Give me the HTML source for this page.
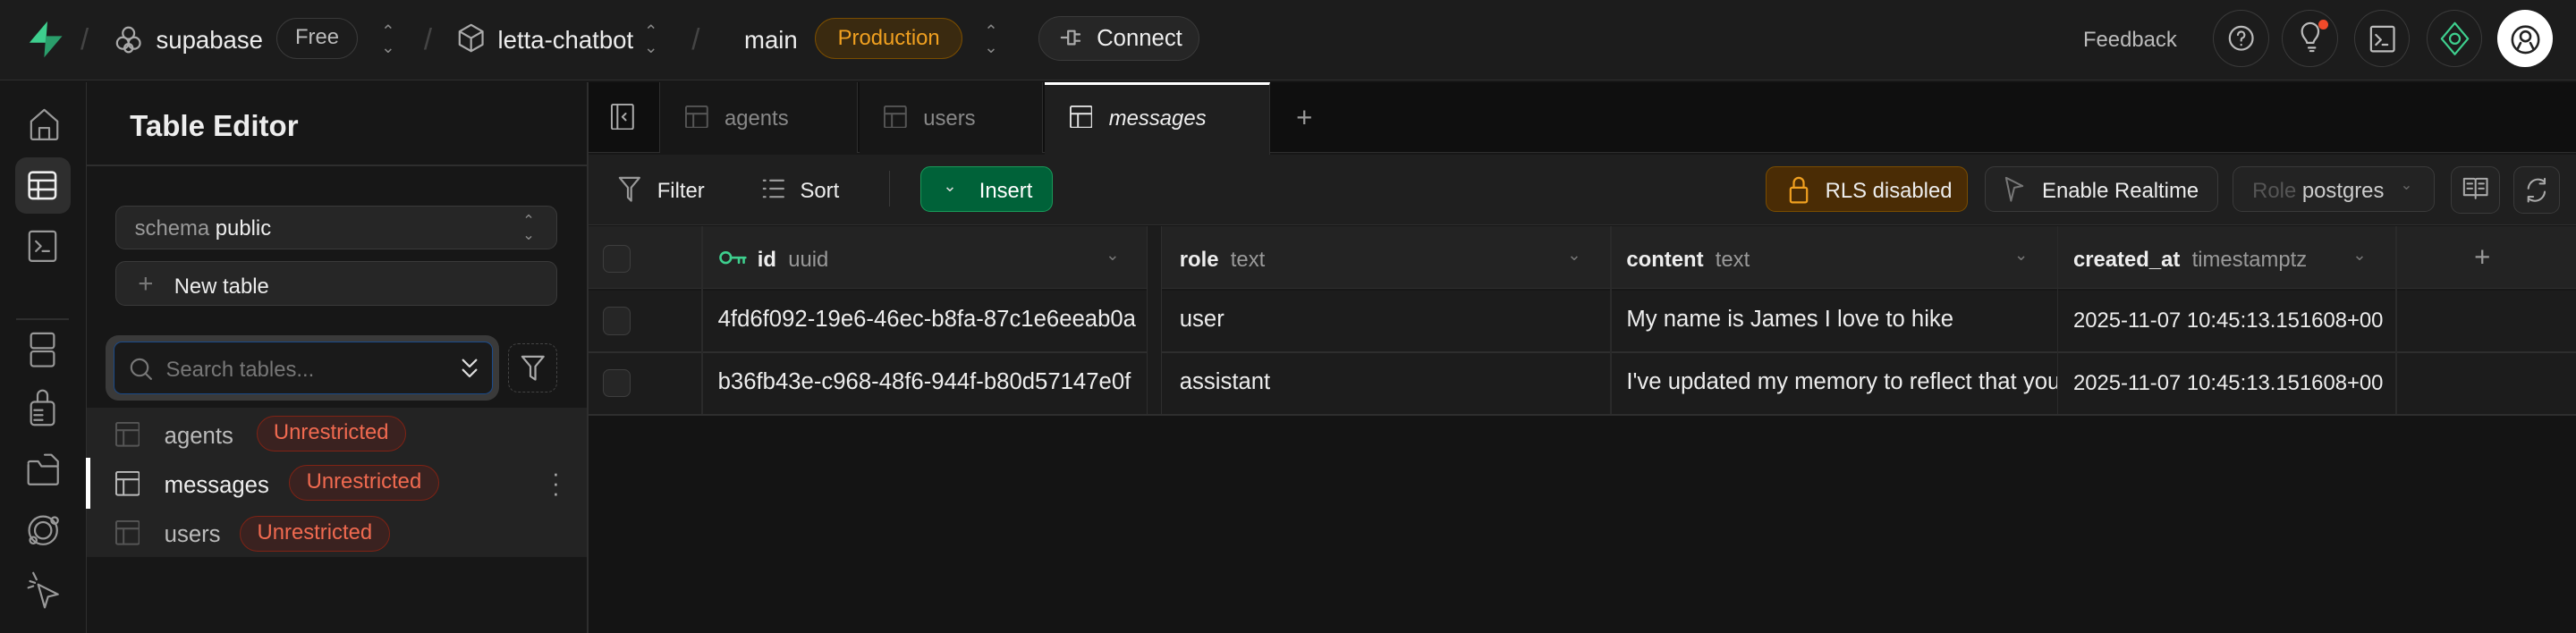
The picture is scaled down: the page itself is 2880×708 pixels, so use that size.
<!DOCTYPE html>
<html><head><meta charset="utf-8"><style>
*{box-sizing:border-box;margin:0;padding:0}
html,body{width:2880px;height:708px;overflow:hidden;background:#171717}
#z{zoom:1.83673;width:1568px;height:386px;position:relative;font-family:"Liberation Sans",sans-serif;color:#ededed;font-size:13px;background:#171717}
.a{position:absolute}
.t{position:absolute;white-space:nowrap;margin-top:1px}
svg{position:absolute;fill:none;stroke-linecap:round;stroke-linejoin:round}
.pill{position:absolute;border-radius:14px;border:1px solid #3a3a3a}
.btn{position:absolute;border:1px solid #3a3a3a;border-radius:6px;background:#262626}
.ur{position:absolute;height:22px;border-radius:11px;border:1px solid #7f2315;background:#3a2220;color:#f06a50;font-size:13px;line-height:20px;padding:0 10px}
.cb{position:absolute;left:367px;width:17px;height:17px;border:1px solid #3e3e3e;border-radius:4px;background:#262626}
.c{font-size:14px}
</style></head><body><div id="z">
<!-- top bar -->
<div class="a" style="left:0;top:0;width:1568px;height:49px;background:#1c1c1c;border-bottom:1px solid #2e2e2e"></div>
<svg style="left:17px;top:12px" width="22" height="24" viewBox="0 0 22 24"><path d="M12 1 L1 14 H11 Z" fill="#3ecf8e" stroke="none"/><path d="M10 23 L21 10 H11 Z" fill="#2a9e6b" stroke="none"/></svg>
<div class="t" style="left:49px;top:13px;color:#444;font-size:18px">/</div>
<svg style="left:70px;top:15px" width="16" height="18" viewBox="0 0 16 18" stroke="#aaa" stroke-width="1.2"><circle cx="8" cy="5" r="3.5"/><circle cx="4.5" cy="11" r="3.5"/><circle cx="11.5" cy="11" r="3.5"/><circle cx="8" cy="14" r="2.5"/></svg>
<div class="t" style="left:95px;top:15px;font-size:15px">supabase</div>
<div class="pill" style="left:168px;top:11px;width:50px;height:25px;color:#bbb;font-size:13px;text-align:center;line-height:23px">Free</div>
<div class="t" style="left:232px;top:13px;color:#888;font-size:10px;line-height:10px">&#8963;<br>&#8964;</div>
<div class="t" style="left:258px;top:13px;color:#444;font-size:18px">/</div>
<svg style="left:279px;top:14px" width="16" height="18" viewBox="0 0 16 18" stroke="#aaa" stroke-width="1.2"><path d="M8 1 L15 5 V13 L8 17 L1 13 V5 Z M1 5 L8 9 L15 5 M8 9 V17"/></svg>
<div class="t" style="left:303px;top:15px;font-size:15px">letta-chatbot</div>
<div class="t" style="left:392px;top:13px;color:#888;font-size:10px;line-height:10px">&#8963;<br>&#8964;</div>
<div class="t" style="left:421px;top:13px;color:#444;font-size:18px">/</div>
<div class="t" style="left:453px;top:15px;font-size:15px">main</div>
<div class="pill" style="left:496px;top:11px;width:90px;height:25px;background:#3a2a10;border-color:#7a4d00;color:#f0a020;font-size:13px;text-align:center;line-height:24px">Production</div>
<div class="t" style="left:599px;top:13px;color:#888;font-size:10px;line-height:10px">&#8963;<br>&#8964;</div>
<div class="pill" style="left:632px;top:10px;width:98px;height:27px;background:#262626;color:#eee;font-size:14px;line-height:27px;padding-left:35px">Connect</div>
<svg style="left:645px;top:17px" width="16" height="12" viewBox="0 0 16 12" stroke="#aaa" stroke-width="1.2"><path d="M1 6H5 M5 2 H9 V10 H5 Z M9 4 H12 M9 8 H12"/></svg>
<div class="t" style="left:1268px;top:16px;color:#bbb;font-size:13px">Feedback</div>
<div class="a" style="left:1347px;top:6px;width:34px;height:35px;border:1px solid #3a3a3a;border-radius:50%"></div>
<div class="a" style="left:1389px;top:6px;width:34px;height:35px;border:1px solid #3a3a3a;border-radius:50%"></div>
<div class="a" style="left:1433px;top:6px;width:34px;height:35px;border:1px solid #3a3a3a;border-radius:50%"></div>
<div class="a" style="left:1477px;top:6px;width:34px;height:35px;border:1px solid #3a3a3a;border-radius:50%"></div>
<div class="a" style="left:1520px;top:6px;width:34px;height:35px;background:#fff;border-radius:50%"></div>
<svg style="left:1356px;top:15px" width="16" height="16" viewBox="0 0 16 16" stroke="#bbb" stroke-width="1.2"><circle cx="8" cy="8" r="7"/><path d="M6 6a2 2 0 1 1 2.5 2c-.5.3-.5.8-.5 1.5M8 12v.1"/></svg>
<svg style="left:1399px;top:13px" width="16" height="20" viewBox="0 0 16 20" stroke="#bbb" stroke-width="1.2"><path d="M5 13c0-2-3-3-3-7a5 5 0 0 1 10 0c0 4-3 5-3 7Z M6 16h4 M7 18h2"/></svg>
<div class="a" style="left:1411px;top:12px;width:6px;height:6px;border-radius:50%;background:#f04a2a"></div>
<svg style="left:1442px;top:15px" width="16" height="17" viewBox="0 0 16 17" stroke="#bbb" stroke-width="1.2"><rect x="1" y="1" width="14" height="15" rx="1"/><path d="M4 6l3 3-3 3M8 12h3"/></svg>
<svg style="left:1485px;top:13px" width="18" height="21" viewBox="0 0 18 21" stroke="#3ecf8e" stroke-width="1.2"><path d="M9 1 L17 10.5 L9 20 L1 10.5 Z"/><circle cx="9" cy="10.5" r="3"/></svg>
<svg style="left:1528px;top:14px" width="18" height="20" viewBox="0 0 18 20" stroke="#222" stroke-width="1.4"><circle cx="9" cy="10" r="8"/><circle cx="9" cy="8" r="3"/><path d="M4 16 L6 12 M14 16 L12 12"/></svg>

<!-- left rail -->
<div class="a" style="left:52px;top:50px;width:1px;height:336px;background:#2e2e2e"></div>
<svg style="left:18px;top:66px" width="18" height="20" viewBox="0 0 18 20" stroke="#999" stroke-width="1.2"><path d="M1 8 L9 1 L17 8 V18 a1 1 0 0 1-1 1 H2 a1 1 0 0 1-1-1 Z M6 19 V12 H12 V19"/></svg>
<div class="a" style="left:9px;top:96px;width:34px;height:34px;border-radius:7px;background:#2e2e2e"></div>
<svg style="left:16px;top:103px" width="20" height="20" viewBox="0 0 20 20" stroke="#eee" stroke-width="1.4"><rect x="2" y="2" width="16" height="16" rx="2"/><path d="M2 7H18 M2 12.5H18 M7.5 7V18"/></svg>
<svg style="left:17px;top:140px" width="18" height="20" viewBox="0 0 18 20" stroke="#999" stroke-width="1.2"><rect x="1" y="1" width="16" height="18" rx="1.5"/><path d="M5 7l3 3-3 3M9 13h4"/></svg>
<div class="a" style="left:10px;top:194px;width:32px;height:1px;background:#2e2e2e"></div>
<svg style="left:17px;top:202px" width="18" height="22" viewBox="0 0 18 22" stroke="#999" stroke-width="1.2"><rect x="2" y="1" width="14" height="9" rx="1.5"/><rect x="2" y="12" width="14" height="9" rx="1.5"/></svg>
<svg style="left:17px;top:236px" width="18" height="24" viewBox="0 0 18 24" stroke="#999" stroke-width="1.2"><path d="M6 9V5a3 3 0 0 1 6 0v4"/><rect x="2" y="9" width="14" height="14" rx="2"/><path d="M4 14h5M4 17h5M4 20h5"/></svg>
<svg style="left:15px;top:275px" width="22" height="22" viewBox="0 0 22 22" stroke="#999" stroke-width="1.2"><path d="M2 8 V19 a1 1 0 0 0 1 1 H19 a1 1 0 0 0 1-1 V10 a1 1 0 0 0-1-1 H10 L8 6 H3 a1 1 0 0 0-1 1 M12 2 H16 L20 6 V9"/></svg>
<svg style="left:15px;top:312px" width="22" height="22" viewBox="0 0 22 22" stroke="#999" stroke-width="1.2"><circle cx="11" cy="11" r="8.5"/><circle cx="11" cy="11" r="5"/><circle cx="18" cy="5" r="2"/><circle cx="5" cy="17" r="2"/></svg>
<svg style="left:15px;top:348px" width="22" height="24" viewBox="0 0 22 24" stroke="#999" stroke-width="1.2"><path d="M8 8 L20 14 L14 15.5 L12 22 Z M3 6 L6 7 M5 1 L7 5 M2 10 L5 9"/></svg>

<!-- sidebar -->
<div class="t" style="left:79px;top:66px;font-size:18px;font-weight:bold">Table Editor</div>
<div class="a" style="left:53px;top:100px;width:304px;height:1px;background:#2e2e2e"></div>
<div class="a" style="left:357px;top:50px;width:1px;height:336px;background:#2e2e2e"></div>
<div class="btn" style="left:70px;top:125px;width:269px;height:27px"></div>
<div class="t" style="left:82px;top:131px;font-size:13px;color:#999">schema <span style="color:#eee">public</span></div>
<div class="t" style="left:318px;top:129px;color:#888;font-size:9px;line-height:9px">&#8963;<br>&#8964;</div>
<div class="btn" style="left:70px;top:159px;width:269px;height:27px"></div>
<div class="t" style="left:84px;top:163px;font-size:16px;color:#777">+</div>
<div class="t" style="left:106px;top:166px;font-size:13px">New table</div>
<div class="a" style="left:64px;top:204px;width:240px;height:40px;border-radius:8px;background:#3a3a3a"></div>
<div class="a" style="left:69px;top:208px;width:231px;height:32px;border:1px solid #1a4a8a;border-radius:5px;background:#1a1a1a"></div>
<svg style="left:79px;top:218px" width="14" height="14" viewBox="0 0 14 14" stroke="#777" stroke-width="1.2"><circle cx="6" cy="6" r="5"/><path d="M10 10l3 3"/></svg>
<div class="t" style="left:101px;top:217px;font-size:13px;color:#777">Search tables...</div>
<svg style="left:280px;top:217px" width="12" height="14" viewBox="0 0 12 14" stroke="#ddd" stroke-width="1.2"><path d="M2 2l4 4 4-4M2 8l4 4 4-4"/></svg>
<div class="a" style="left:309px;top:209px;width:30px;height:30px;border:1px dashed #444;border-radius:6px"></div>
<svg style="left:317px;top:216px" width="15" height="16" viewBox="0 0 15 16" stroke="#aaa" stroke-width="1.2"><path d="M1 1H14L9 7V15L6 13V7Z"/></svg>
<div class="a" style="left:53px;top:248px;width:304px;height:91px;background:#232323"></div>
<div class="a" style="left:52px;top:279px;width:3px;height:31px;background:#fff"></div>
<svg style="left:70px;top:257px" width="15" height="15" viewBox="0 0 15 15" stroke="#555" stroke-width="1.1"><rect x=".5" y=".5" width="14" height="14" rx="1"/><path d="M.5 5H14.5M5 5V14.5"/></svg>
<div class="t" style="left:100px;top:257px;font-size:14px;color:#bbb">agents</div>
<div class="ur" style="left:156px;top:253px">Unrestricted</div>
<svg style="left:70px;top:287px" width="15" height="15" viewBox="0 0 15 15" stroke="#bbb" stroke-width="1.1"><rect x=".5" y=".5" width="14" height="14" rx="1"/><path d="M.5 5H14.5M5 5V14.5"/></svg>
<div class="t" style="left:100px;top:287px;font-size:14px;color:#eee">messages</div>
<div class="ur" style="left:176px;top:283px">Unrestricted</div>
<div class="t" style="left:336px;top:285px;font-size:14px;color:#aaa;line-height:6px">·<br>·<br>·</div>
<svg style="left:70px;top:317px" width="15" height="15" viewBox="0 0 15 15" stroke="#555" stroke-width="1.1"><rect x=".5" y=".5" width="14" height="14" rx="1"/><path d="M.5 5H14.5M5 5V14.5"/></svg>
<div class="t" style="left:100px;top:317px;font-size:14px;color:#bbb">users</div>
<div class="ur" style="left:146px;top:314px">Unrestricted</div>

<!-- tabs -->
<div class="a" style="left:358px;top:50px;width:1210px;height:43px;background:#0f0f0f;border-bottom:1px solid #2e2e2e"></div>
<div class="a" style="left:401px;top:50px;width:1px;height:43px;background:#2e2e2e"></div>
<svg style="left:372px;top:63px" width="14" height="16" viewBox="0 0 14 16" stroke="#aaa" stroke-width="1.1"><rect x=".5" y=".5" width="13" height="15" rx="1"/><path d="M4 .5V15.5M9 6L7 8L9 10"/></svg>
<div class="a" style="left:402px;top:50px;width:120px;height:43px;background:#171717;border-right:1px solid #2e2e2e"></div>
<svg style="left:417px;top:64px" width="14" height="14" viewBox="0 0 14 14" stroke="#555" stroke-width="1.1"><rect x=".5" y=".5" width="13" height="13" rx="1"/><path d="M.5 5H13.5M5 5V13.5"/></svg>
<div class="t" style="left:441px;top:64px;font-size:13px;color:#888">agents</div>
<div class="a" style="left:523px;top:50px;width:112px;height:43px;background:#171717;border-right:1px solid #2e2e2e"></div>
<svg style="left:538px;top:64px" width="14" height="14" viewBox="0 0 14 14" stroke="#555" stroke-width="1.1"><rect x=".5" y=".5" width="13" height="13" rx="1"/><path d="M.5 5H13.5M5 5V13.5"/></svg>
<div class="t" style="left:562px;top:64px;font-size:13px;color:#888">users</div>
<div class="a" style="left:636px;top:50px;width:137px;height:44px;background:#1f1f1f;border-top:2px solid #fff;border-right:1px solid #2e2e2e"></div>
<svg style="left:651px;top:64px" width="14" height="14" viewBox="0 0 14 14" stroke="#ddd" stroke-width="1.1"><rect x=".5" y=".5" width="13" height="13" rx="1"/><path d="M.5 5H13.5M5 5V13.5"/></svg>
<div class="t" style="left:675px;top:64px;font-size:13px;color:#eee;font-style:italic">messages</div>
<div class="t" style="left:789px;top:61px;font-size:17px;color:#999">+</div>

<!-- toolbar -->
<div class="a" style="left:358px;top:94px;width:1210px;height:43px;background:#1f1f1f;border-bottom:1px solid #2e2e2e"></div>
<svg style="left:376px;top:107px" width="14" height="16" viewBox="0 0 14 16" stroke="#999" stroke-width="1.2"><path d="M1 1H13L8 7V15L6 13V7Z"/></svg>
<div class="t" style="left:400px;top:108px;font-size:13px">Filter</div>
<svg style="left:464px;top:109px" width="14" height="12" viewBox="0 0 14 12" stroke="#999" stroke-width="1.2"><path d="M1 1h1M1 6h1M1 11h1M5 1h8M5 6h8M5 11h8"/></svg>
<div class="t" style="left:487px;top:108px;font-size:13px">Sort</div>
<div class="a" style="left:541px;top:104px;width:1px;height:22px;background:#3a3a3a"></div>
<div class="a" style="left:560px;top:101px;width:81px;height:28px;background:#006239;border:1px solid #1a9a5a;border-radius:6px"></div>
<div class="t" style="left:574px;top:106px;font-size:10px;color:#ddd">&#8964;</div>
<div class="t" style="left:596px;top:108px;font-size:13px;color:#fff">Insert</div>
<div class="a" style="left:1075px;top:101px;width:123px;height:28px;background:#4a2c05;border:1px solid #7a4d00;border-radius:6px"></div>
<svg style="left:1089px;top:107px" width="12" height="17" viewBox="0 0 12 17" stroke="#f0a020" stroke-width="1.2"><path d="M3 7V4a3 3 0 0 1 6 0v3"/><rect x="1" y="7" width="10" height="9" rx="1"/></svg>
<div class="t" style="left:1111px;top:108px;font-size:13px">RLS disabled</div>
<div class="btn" style="left:1208px;top:101px;width:142px;height:28px;background:#232323"></div>
<svg style="left:1220px;top:107px" width="12" height="16" viewBox="0 0 12 16" stroke="#777" stroke-width="1.1"><path d="M1 1L11 6L6 7L4 15Z"/></svg>
<div class="t" style="left:1243px;top:108px;font-size:13px">Enable Realtime</div>
<div class="btn" style="left:1359px;top:101px;width:123px;height:28px;background:#232323"></div>
<div class="t" style="left:1371px;top:108px;font-size:13px;color:#555">Role <span style="color:#ccc">postgres</span></div>
<div class="t" style="left:1461px;top:106px;font-size:9px;color:#666">&#8964;</div>
<div class="btn" style="left:1492px;top:101px;width:30px;height:29px;background:#232323"></div>
<svg style="left:1499px;top:108px" width="16" height="14" viewBox="0 0 16 14" stroke="#aaa" stroke-width="1.1"><path d="M1 1H7a1 1 0 0 1 1 1V13M15 1H9a1 1 0 0 0-1 1M1 1V11H8M15 1V11H8M3 4H6M3 7H6M10 4H13M10 7H13"/></svg>
<div class="btn" style="left:1530px;top:101px;width:28px;height:29px;background:#232323"></div>
<svg style="left:1537px;top:108px" width="14" height="16" viewBox="0 0 14 16" stroke="#aaa" stroke-width="1.1"><path d="M12 3A6 6 0 0 0 2 7M2 13A6 6 0 0 0 12 9M12 1V4H9M2 15V12H5"/></svg>

<!-- grid -->
<div class="a" style="left:358px;top:138px;width:1210px;height:38px;background:#232323;border-bottom:1px solid #2e2e2e"></div>
<div class="a" style="left:358px;top:177px;width:1210px;height:75px;background:#1c1c1c"></div>
<div class="a" style="left:358px;top:214px;width:1210px;height:1px;background:#2e2e2e"></div>
<div class="a" style="left:358px;top:252px;width:1210px;height:1px;background:#2e2e2e"></div>
<div class="a" style="left:358px;top:253px;width:1210px;height:133px;background:#141414"></div>
<div class="a" style="left:427px;top:138px;width:1px;height:114px;background:#2a2a2a"></div>
<div class="a" style="left:698px;top:138px;width:9px;height:114px;background:#1c1c1c;border-left:1px solid #2e2e2e;border-right:1px solid #2e2e2e"></div>
<div class="a" style="left:980px;top:138px;width:1px;height:114px;background:#2a2a2a"></div>
<div class="a" style="left:1252px;top:138px;width:1px;height:114px;background:#2a2a2a"></div>
<div class="a" style="left:1458px;top:138px;width:1px;height:114px;background:#2a2a2a"></div>
<div class="cb" style="top:149px"></div>
<div class="cb" style="top:187px"></div>
<div class="cb" style="top:225px"></div>
<svg style="left:438px;top:152px" width="17" height="10" viewBox="0 0 17 10" stroke="#3ecf8e" stroke-width="1.4"><circle cx="4" cy="5" r="3.2"/><path d="M7 5H16M12 5V8M15 5V8"/></svg>
<div class="t" style="left:461px;top:150px;font-size:13px"><b>id</b>&nbsp; <span style="color:#999">uuid</span></div>
<div class="t" style="left:673px;top:148px;font-size:10px;color:#777">&#8964;</div>
<div class="t" style="left:718px;top:150px;font-size:13px"><b>role</b>&nbsp; <span style="color:#999">text</span></div>
<div class="t" style="left:954px;top:148px;font-size:10px;color:#777">&#8964;</div>
<div class="t" style="left:990px;top:150px;font-size:13px"><b>content</b>&nbsp; <span style="color:#999">text</span></div>
<div class="t" style="left:1226px;top:148px;font-size:10px;color:#777">&#8964;</div>
<div class="t" style="left:1262px;top:150px;font-size:13px"><b>created_at</b>&nbsp; <span style="color:#999">timestamptz</span></div>
<div class="t" style="left:1432px;top:148px;font-size:10px;color:#777">&#8964;</div>
<div class="t" style="left:1506px;top:146px;font-size:17px;color:#999">+</div>
<div class="t c" style="left:437px;top:186px;width:261px;overflow:hidden">4fd6f092-19e6-46ec-b8fa-87c1e6eeab0a</div>
<div class="t c" style="left:437px;top:224px;width:261px;overflow:hidden">b36fb43e-c968-48f6-944f-b80d57147e0f</div>
<div class="t c" style="left:718px;top:186px">user</div>
<div class="t c" style="left:718px;top:224px">assistant</div>
<div class="t c" style="left:990px;top:186px">My name is James I love to hike</div>
<div class="t c" style="left:990px;top:224px;width:262px;overflow:hidden">I've updated my memory to reflect that you love to hike</div>
<div class="t" style="left:1262px;top:187px;font-size:13px">2025-11-07 10:45:13.151608+00</div>
<div class="t" style="left:1262px;top:225px;font-size:13px">2025-11-07 10:45:13.151608+00</div>
</div></body></html>
